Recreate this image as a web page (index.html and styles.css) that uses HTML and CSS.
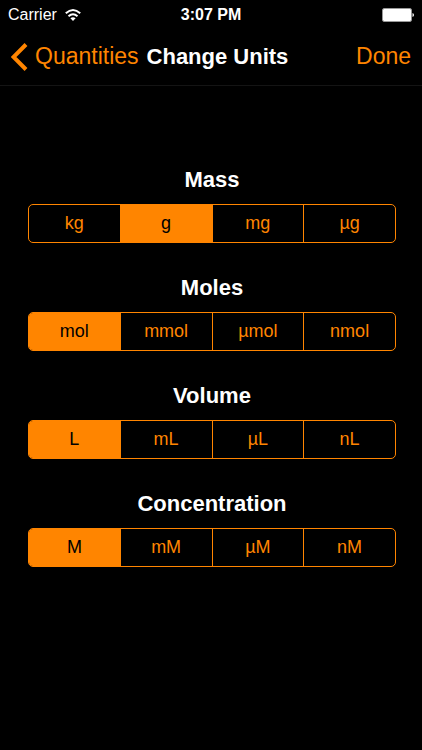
FILE: index.html
```html
<!DOCTYPE html>
<html lang="en">
<head>
  <meta charset="UTF-8" />
  <title>Change Units</title>
  <meta name="viewport" content="width=device-width, initial-scale=1.0" />
  <link rel="stylesheet" href="styles.css">
</head>
<body>
  <div class="status-bar">
    <div class="carrier">
      <span>Carrier</span>
      <svg class="wifi" width="16" height="12" viewBox="0 0 16 12" aria-hidden="true">
        <path d="M0.8 4.3 Q8 -2.2 15.2 4.3" />
        <path d="M3.5 7.2 Q8 3.2 12.5 7.2" />
        <path class="dot" d="M5.4 9.3 Q8 7.2 10.6 9.3 L8 12 Z" />
      </svg>
    </div>
    <span class="time">3:07 PM</span>
    <svg class="battery" width="32" height="14" viewBox="0 0 32 14" aria-hidden="true">
      <rect class="case" x="0.5" y="0.5" width="29" height="13" rx="1.5" />
      <rect x="1" y="1" width="28" height="12" rx="1" />
      <path d="M30.5 5 Q32 5.5 32 7 Q32 8.5 30.5 9 Z" />
    </svg>
  </div>
  <header class="nav-bar">
    <a class="back" href="#quantities">
      <svg width="17" height="28" viewBox="0 0 17 28" aria-hidden="true">
        <path d="M15 1.5 L2.5 14 L15 26.5" />
      </svg>
      <span>Quantities</span>
    </a>
    <h1>Change Units</h1>
    <button class="done" type="button">Done</button>
  </header>
  <main>
    <form class="units">
      <fieldset>
        <legend>Mass</legend>
        <div class="segments">
          <label><input type="radio" name="mass" value="kg"><span>kg</span></label>
          <label><input type="radio" name="mass" value="g" checked><span>g</span></label>
          <label><input type="radio" name="mass" value="mg"><span>mg</span></label>
          <label><input type="radio" name="mass" value="µg"><span>µg</span></label>
        </div>
      </fieldset>
      <fieldset>
        <legend>Moles</legend>
        <div class="segments">
          <label><input type="radio" name="moles" value="mol" checked><span>mol</span></label>
          <label><input type="radio" name="moles" value="mmol"><span>mmol</span></label>
          <label><input type="radio" name="moles" value="µmol"><span>µmol</span></label>
          <label><input type="radio" name="moles" value="nmol"><span>nmol</span></label>
        </div>
      </fieldset>
      <fieldset>
        <legend>Volume</legend>
        <div class="segments">
          <label><input type="radio" name="volume" value="L" checked><span>L</span></label>
          <label><input type="radio" name="volume" value="mL"><span>mL</span></label>
          <label><input type="radio" name="volume" value="µL"><span>µL</span></label>
          <label><input type="radio" name="volume" value="nL"><span>nL</span></label>
        </div>
      </fieldset>
      <fieldset>
        <legend>Concentration</legend>
        <div class="segments">
          <label><input type="radio" name="concentration" value="M" checked><span>M</span></label>
          <label><input type="radio" name="concentration" value="mM"><span>mM</span></label>
          <label><input type="radio" name="concentration" value="µM"><span>µM</span></label>
          <label><input type="radio" name="concentration" value="nM"><span>nM</span></label>
        </div>
      </fieldset>
    </form>
  </main>
</body>
</html>
```
FILE: styles.css
```css
* { box-sizing: border-box; }
body { margin: 0; min-height: 100vh; background: #000; color: #fff; font-family: "Liberation Sans", Arial, sans-serif; }

.status-bar { display: grid; grid-template-columns: 1fr auto 1fr; align-items: center; height: 28px; padding: 0 8px; font-size: 16px; line-height: 30px; }
.carrier { display: flex; align-items: center; gap: 8px; }
.wifi path { fill: none; stroke: #fff; stroke-width: 2; }
.wifi .dot { fill: #fff; stroke: none; }
.time { font-weight: bold; }
.battery { justify-self: end; fill: #fff; }
.battery .case { fill: none; stroke: #999; }

.nav-bar { display: flex; align-items: center; height: 58px; padding: 0 11px; border-bottom: 1px solid #141414; }
.back { display: flex; align-items: center; gap: 7px; color: #ff8500; font-size: 23px; text-decoration: none; }
.back path { fill: none; stroke: #ff8500; stroke-width: 4; }
.nav-bar h1 { margin: 0 0 0 8px; font-size: 22px; white-space: nowrap; }
.done { margin-left: auto; padding: 0; border: none; background: none; color: #ff8500; font-family: inherit; font-size: 23px; cursor: pointer; }

.units { display: flex; flex-direction: column; gap: 27px; padding: 76px 26px 0 28px; }
fieldset { margin: 0; padding: 0; border: none; min-width: 0; }
legend { width: 100%; height: 42px; padding: 0; font-size: 22px; line-height: 36px; font-weight: bold; text-align: center; }
.segments { display: flex; height: 39px; border: 1px solid #ff8500; border-radius: 5px; overflow: hidden; }
.segments label { flex: 1; display: flex; cursor: pointer; }
.segments label:not(:last-child) { border-right: 1px solid #ff8500; }
.segments input { appearance: none; width: 0; height: 0; margin: 0; }
.segments span { flex: 1; color: #ff8500; font-size: 18px; line-height: 37px; text-align: center; }
.segments input:checked + span { background: #ff8500; color: #000; }
.segments input:focus-visible + span { text-decoration: underline; }
```
